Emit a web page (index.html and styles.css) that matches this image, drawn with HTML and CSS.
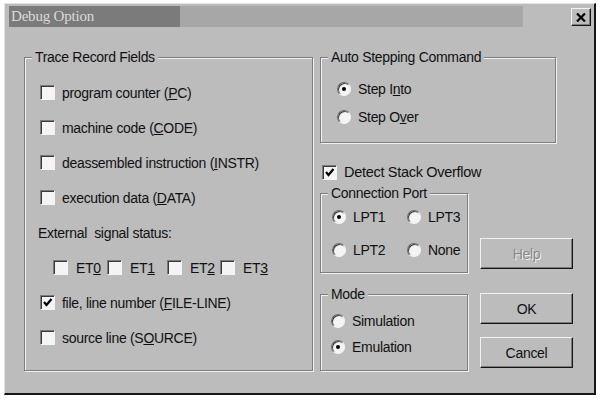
FILE: index.html
```html
<!DOCTYPE html>
<html lang="en">
<head>
    <meta charset="UTF-8">
    <title>Debug Option</title>
    <link rel="stylesheet" href="styles.css">
</head>
<body>

<div class="window">
    <div class="titlebar">
        <div class="caption">Debug Option</div>
        <div class="caption-fade"></div>
        <div class="close">
            <svg width="10" height="9" viewBox="0 0 10 9"><path d="M1 0.5 L9 8.5 M9 0.5 L1 8.5" stroke="#000" stroke-width="2.2"/></svg>
        </div>
    </div>

    <div class="content">
        <fieldset class="group trace">
            <legend>Trace Record Fields</legend>
            <div class="row"><span class="box"></span><span>program counter (<u>P</u>C)</span></div>
            <div class="row"><span class="box"></span><span>machine code (<u>C</u>ODE)</span></div>
            <div class="row"><span class="box"></span><span>deassembled instruction (<u>I</u>NSTR)</span></div>
            <div class="row"><span class="box"></span><span>execution data (<u>D</u>ATA)</span></div>
            <div class="row note">External&nbsp; signal status:</div>
            <div class="row signals">
                <div class="sig"><span class="box"></span><span>ET<u>0</u></span></div>
                <div class="sig"><span class="box"></span><span>ET<u>1</u></span></div>
                <div class="sig"><span class="box"></span><span>ET<u>2</u></span></div>
                <div class="sig"><span class="box"></span><span>ET<u>3</u></span></div>
            </div>
            <div class="row"><span class="box checked"><svg width="11" height="11" viewBox="0 0 11 11"><path d="M2 5 L4.5 8 L9.5 2" fill="none" stroke="#000" stroke-width="2.2"/></svg></span><span>file, line number (<u>F</u>ILE-LINE)</span></div>
            <div class="row"><span class="box"></span><span>source line (S<u>O</u>URCE)</span></div>
        </fieldset>

        <div class="side">
            <fieldset class="group auto">
                <legend>Auto Stepping Command</legend>
                <div class="opt"><span class="radio on"></span><span>Step I<u>n</u>to</span></div>
                <div class="opt"><span class="radio"></span><span>Step O<u>v</u>er</span></div>
            </fieldset>

            <div class="row detect"><span class="box checked"><svg width="11" height="11" viewBox="0 0 11 11"><path d="M2 5 L4.5 8 L9.5 2" fill="none" stroke="#000" stroke-width="2.2"/></svg></span><span>Detect Stack Overflow</span></div>

            <div class="lower">
                <fieldset class="group port">
                    <legend>Connection Port</legend>
                    <div class="ports">
                        <div class="opt"><span class="radio on"></span><span>LPT1</span></div>
                        <div class="opt"><span class="radio"></span><span>LPT3</span></div>
                        <div class="opt"><span class="radio"></span><span>LPT2</span></div>
                        <div class="opt"><span class="radio"></span><span>None</span></div>
                    </div>
                </fieldset>
                <div class="btn help">Help</div>

                <fieldset class="group mode">
                    <legend>Mode</legend>
                    <div class="opt"><span class="radio"></span><span>Simulation</span></div>
                    <div class="opt"><span class="radio on"></span><span>Emulation</span></div>
                </fieldset>
                <div class="actions">
                    <div class="btn">OK</div>
                    <div class="btn">Cancel</div>
                </div>
            </div>
        </div>
    </div>
</div>

</body>
</html>
```

FILE: styles.css
```css
body {
    margin: 0;
    background: #fff;
    font-family: "Liberation Sans", Arial, sans-serif;
    font-size: 14px;
    letter-spacing: -0.3px;
    color: #111;
}
.window {
    box-sizing: border-box;
    width: 592px;
    height: 392px;
    margin: 3px 0 0 4px;
    background: #bcbcbc;
    border-top: 1px solid #e4e4e4;
    border-left: 1px solid #e4e4e4;
    border-right: 2px solid #151515;
    border-bottom: 2px solid #151515;
}
.titlebar {
    display: flex;
    height: 21px;
    margin: 2px 3px 0 4px;
}
.caption {
    box-sizing: border-box;
    width: 171px;
    padding-left: 2px;
    background: #7b7b7b;
    color: #dadada;
    font-family: "Liberation Serif", serif;
    font-size: 15px;
    letter-spacing: -0.2px;
    line-height: 21px;
}
.caption-fade {
    width: 343px;
    background: #a7a7a7;
}
.close {
    box-sizing: border-box;
    display: flex;
    justify-content: center;
    align-items: center;
    width: 20px;
    height: 18px;
    margin: 2px 0 0 auto;
    border: 1px solid;
    border-color: #f2f2f2 #151515 #151515 #f2f2f2;
    box-shadow: inset -1px -1px 0 #7b7b7b;
}
.content {
    display: flex;
    gap: 7px;
    padding: 23px 0 0 19px;
}

/* group boxes */
.group {
    box-sizing: border-box;
    margin: 0;
    min-width: 0;
    border: 1px solid #7d7d7d;
    box-shadow: 1px 1px 0 #f2f2f2, inset 1px 1px 0 #f2f2f2;
}
.group legend {
    padding: 0 3px;
    line-height: 14px;
    background: #bcbcbc;
}
.trace {
    width: 289px;
    height: 321px;
    padding: 11px 0 0 15px;
}
.trace legend {
    margin-left: -8px;
}
.row {
    display: flex;
    align-items: center;
    gap: 6px;
    height: 35px;
}
.note {
    margin-left: -2px;
}
.signals {
    display: grid;
    grid-template-columns: 54px 60px 53px auto;
    margin-left: 13px;
    gap: 0;
}
.sig {
    display: flex;
    align-items: center;
    gap: 7px;
}
.box {
    box-sizing: border-box;
    display: flex;
    justify-content: center;
    align-items: center;
    flex: none;
    width: 15px;
    height: 15px;
    margin-right: 1px;
    background: #f4f4f4;
    border: 1px solid;
    border-color: #7a7a7a #f4f4f4 #f4f4f4 #7a7a7a;
    box-shadow: inset 1px 1px 0 #3a3a3a;
}
.radio {
    box-sizing: border-box;
    position: relative;
    flex: none;
    width: 14px;
    height: 14px;
    border-radius: 50%;
    background: #f4f4f4;
    border: 1px solid;
    border-color: #6a6a6a #f4f4f4 #f4f4f4 #6a6a6a;
    box-shadow: inset 1px 1px 0 #3a3a3a;
}
.radio.on::after {
    content: '';
    position: absolute;
    top: 4px;
    left: 4px;
    width: 4px;
    height: 4px;
    border-radius: 50%;
    background: #000;
}
.opt {
    display: flex;
    align-items: center;
    gap: 7px;
}

/* right side */
.side {
    display: flex;
    flex-direction: column;
    width: 253px;
}
.auto {
    width: 236px;
    height: 93px;
    padding: 11px 0 0 16px;
}
.auto legend {
    margin-left: -9px;
}
.auto .opt {
    height: 28px;
}
.detect {
    height: 24px;
    margin: 17px 0 2px 2px;
}
.detect span + span {
    font-size: 14.5px;
}
.lower {
    display: grid;
    grid-template-columns: 148px 93px;
    column-gap: 12px;
    row-gap: 14px;
}
.port {
    height: 87px;
    padding: 0 0 0 11px;
}
.port legend {
    margin-left: -4px;
}
.ports {
    display: grid;
    grid-template-columns: 75px auto;
    grid-auto-rows: 33px;
}
.mode {
    height: 84px;
    padding: 7px 0 0 10px;
}
.mode legend {
    margin-left: -3px;
}
.mode .opt {
    height: 26px;
}
.btn {
    box-sizing: border-box;
    display: flex;
    justify-content: center;
    align-items: center;
    width: 93px;
    height: 31px;
    border: 1px solid;
    border-color: #f2f2f2 #151515 #151515 #f2f2f2;
    box-shadow: inset -1px -1px 0 #7b7b7b;
}
.help {
    align-self: end;
    margin-bottom: 4px;
    color: #8a8a8a;
    text-shadow: 1px 1px 0 #f2f2f2;
}
.actions {
    display: flex;
    flex-direction: column;
    gap: 13px;
    padding-top: 6px;
}
```
